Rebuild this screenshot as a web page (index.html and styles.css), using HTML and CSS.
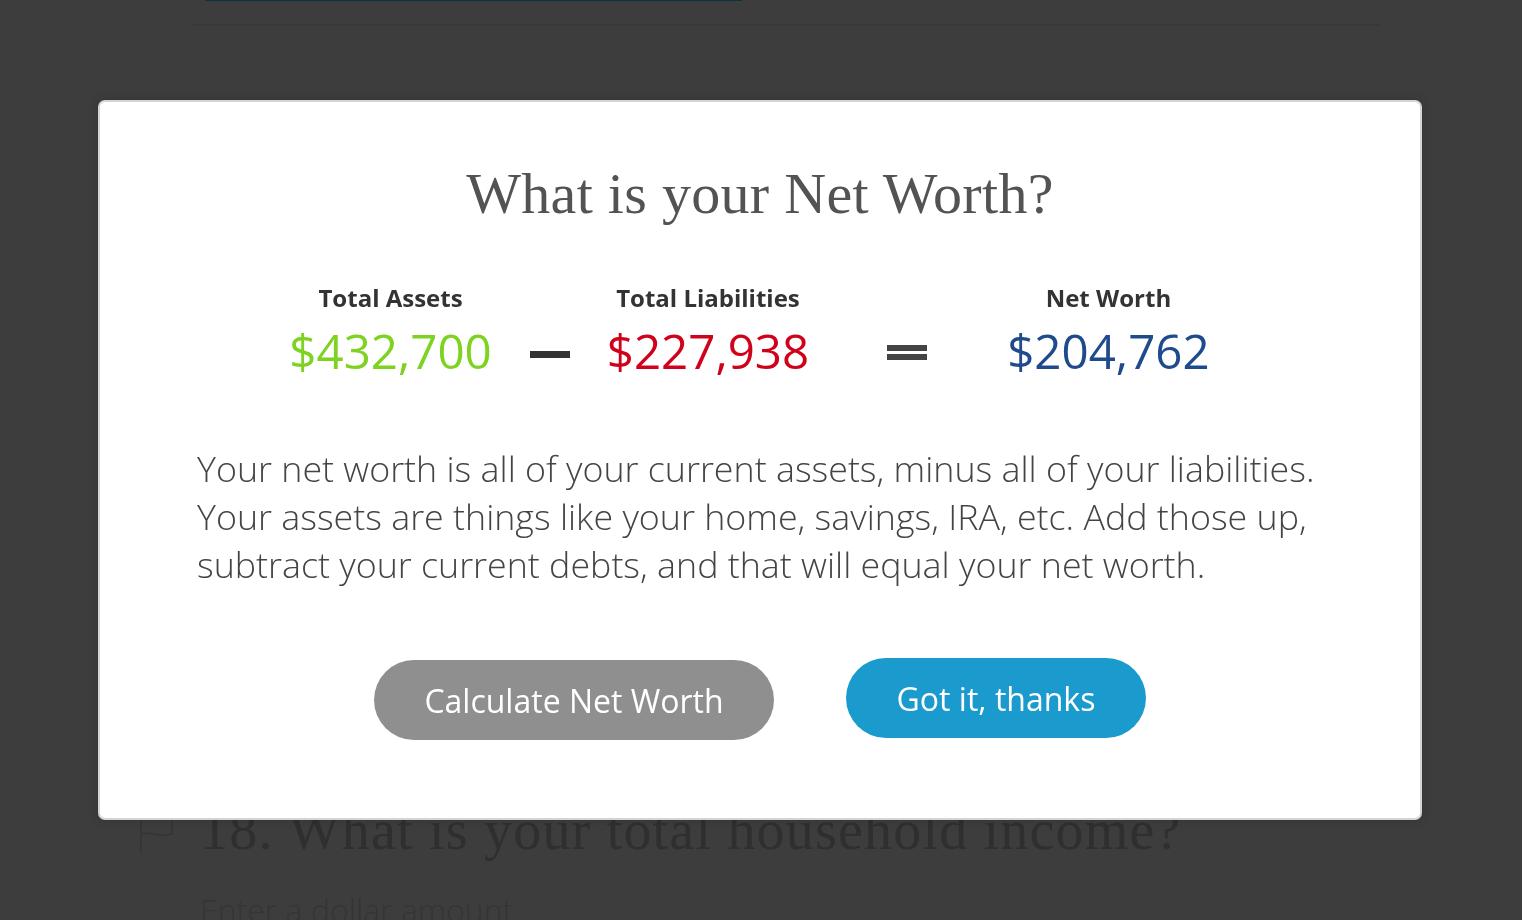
FILE: index.html
```html
<!DOCTYPE html>
<html lang="en">
<head>
    <meta charset="UTF-8">
    <meta name="viewport" content="width=device-width, initial-scale=1.0">
    <title>Net Worth</title>
    <link rel="stylesheet" href="styles.css">
</head>
<body>
    <div class="page">
        <div class="progress-track">
            <div class="progress-done"></div>
        </div>
        <div class="divider"></div>

        <div class="question">
            <svg class="flag" width="40" height="60" viewBox="0 0 40 60" fill="none" stroke="#343434" stroke-width="1.5">
                <path d="M3 2 V50"/>
                <path d="M3 4 C12 1 22 8 34 4 V30 C22 34 12 27 3 30"/>
            </svg>
            <div class="question-body">
                <h2 class="question-title">18. What is your total household income?</h2>
                <div class="question-hint">Enter a dollar amount</div>
            </div>
        </div>
    </div>

    <div class="modal">
        <h1 class="modal-title">What is your Net Worth?</h1>

        <div class="equation">
            <div class="figure">
                <div class="figure-label">Total Assets</div>
                <div class="figure-value assets">$432,700</div>
            </div>
            <div class="sign minus"></div>
            <div class="figure">
                <div class="figure-label">Total Liabilities</div>
                <div class="figure-value liabilities">$227,938</div>
            </div>
            <div class="sign equals"></div>
            <div class="figure">
                <div class="figure-label">Net Worth</div>
                <div class="figure-value net">$204,762</div>
            </div>
        </div>

        <p class="explain">
            Your net worth is all of your current assets, minus all of your liabilities.
            Your assets are things like your home, savings, IRA, etc. Add those up,
            subtract your current debts, and that will equal your net worth.
        </p>

        <div class="actions">
            <button class="btn btn-grey">Calculate Net Worth</button>
            <button class="btn btn-blue">Got it, thanks</button>
        </div>
    </div>
</body>
</html>
```

FILE: styles.css
```css
* {
    margin: 0;
    padding: 0;
    box-sizing: border-box;
}

body {
    font-family: 'Open Sans', 'Liberation Sans', sans-serif;
    background: #3d3d3d;
    height: 100vh;
    overflow: hidden;
}

/* page behind the overlay (already dimmed) */
.page {
    width: 1188px;
    margin-left: 193px;
}

.progress-track {
    height: 2px;
    padding-left: 12px;
}

.progress-done {
    width: 537px;
    height: 1px;
    background: #0c3342;
}

.divider {
    margin-top: 22px;
    height: 2px;
    background: #383838;
}

.question {
    display: flex;
    margin-top: 772px;
    margin-left: -55px;
}

.flag {
    margin-top: 6px;
    margin-right: 22px;
}

.question-title {
    font-family: 'Liberation Serif', serif;
    font-weight: normal;
    font-size: 56px;
    line-height: 64px;
    letter-spacing: 1.2px;
    color: #2f2f2f;
    white-space: nowrap;
}

.question-hint {
    margin-top: 26px;
    font-size: 32px;
    font-weight: 300;
    color: #353535;
}

/* modal */
.modal {
    position: fixed;
    left: 98px;
    top: 100px;
    width: 1324px;
    height: 720px;
    background: #fff;
    border: 2px solid #d4d4d4;
    border-radius: 7px;
    box-shadow: 0 0 12px rgba(0, 0, 0, 0.15);
    padding: 0 97px;
}

.modal-title {
    margin-top: 56px;
    text-align: center;
    font-family: 'Liberation Serif', serif;
    font-weight: normal;
    font-size: 58px;
    line-height: 72px;
    letter-spacing: 0.3px;
    color: #535353;
}

.equation {
    display: flex;
    justify-content: center;
    align-items: flex-end;
    margin-top: 53px;
    padding-right: 21px;
}

.figure {
    display: flex;
    flex-direction: column;
    align-items: center;
}

.figure-label {
    font-size: 24px;
    font-weight: bold;
    color: #333;
    line-height: 30px;
}

.figure-value {
    margin-top: 6px;
    font-size: 47.5px;
    line-height: 64px;
}

.assets { color: #7ed321; }
.liabilities { color: #d0021b; }
.net { color: #1f4a8c; }

.sign {
    width: 40px;
}

.minus {
    height: 7px;
    background: #333;
    margin-left: 38px;
    margin-right: 37px;
    margin-bottom: 25px;
}

.equals {
    height: 15px;
    border-top: 6px solid #444;
    border-bottom: 6px solid #444;
    margin-left: 78px;
    margin-right: 80px;
    margin-bottom: 23px;
}

.explain {
    margin-top: 61px;
    font-size: 35.8px;
    font-weight: 300;
    line-height: 48px;
    color: #444;
}

.actions {
    display: flex;
    justify-content: center;
    align-items: flex-start;
    gap: 72px;
    margin-top: 70px;
}

.btn {
    border: none;
    height: 80px;
    border-radius: 40px;
    font-family: 'Open Sans', 'Liberation Sans', sans-serif;
    font-size: 32px;
    color: #fff;
}

.btn-grey {
    width: 400px;
    background: #8f8f8f;
    margin-top: 2px;
}

.btn-blue {
    width: 300px;
    background: #1a9acd;
}
```
